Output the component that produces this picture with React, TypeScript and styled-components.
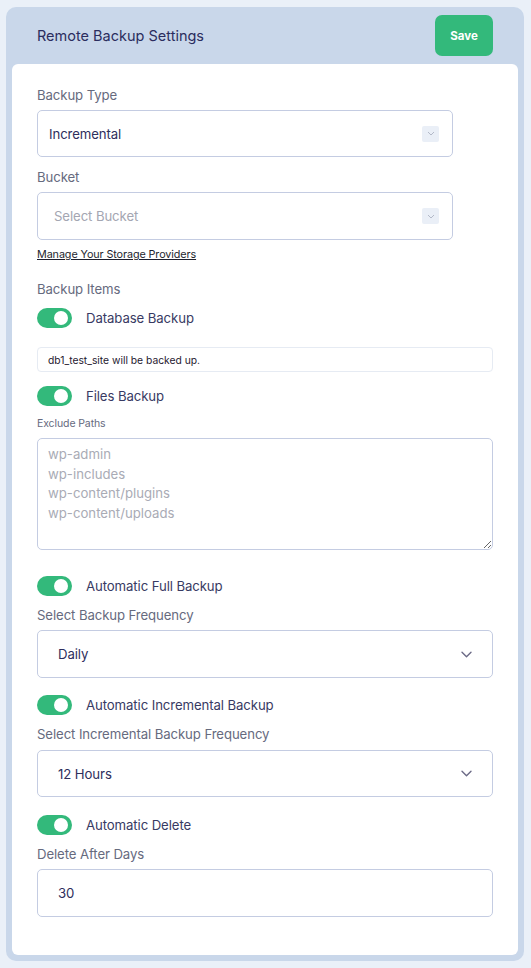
import React from "react";
import styled, { createGlobalStyle } from "styled-components";

const GlobalStyle = createGlobalStyle`
  html, body { margin: 0; padding: 0; background: #eaf0f8; }
  body { font-family: Inter, "Noto Sans", "Liberation Sans", sans-serif; -webkit-font-smoothing: antialiased; }
  * { box-sizing: border-box; }
`;

const Page = styled.div`
  padding: 7px 7px 7px 6px;
`;

const Panel = styled.div`
  background: #c9d7ea;
  border-radius: 10px;
  padding: 0 6px 6px 6px;
`;

const Header = styled.div`
  display: flex;
  align-items: center;
  justify-content: space-between;
  padding: 8px 25px 8px 25px;
`;

const Title = styled.h1`
  margin: 0;
  font-size: 14.5px;
  font-weight: 400;
  color: #2b2d5e;
  letter-spacing: 0;
`;

const SaveButton = styled.button`
  width: 58px;
  height: 41px;
  border: none;
  border-radius: 7px;
  background: #33b97b;
  color: #fff;
  font-family: inherit;
  font-size: 11.5px;
  font-weight: 700;
  cursor: pointer;
`;

const Card = styled.div`
  background: #fff;
  border-radius: 6px;
  padding: 21px 25px 38px 25px;
  display: flex;
  flex-direction: column;
`;

const Label = styled.div<{ $small?: boolean; $mt?: number }>`
  font-size: ${(p) => (p.$small ? "10.5px" : "13.2px")};
  line-height: ${(p) => (p.$small ? "15px" : "20px")};
  color: #666a7e;
  margin-top: ${(p) => p.$mt ?? 0}px;
  letter-spacing: -0.1px;
`;

const SelectBox = styled.div<{ $width?: number; $pad: number; $mt: number; $h: number }>`
  margin-top: ${(p) => p.$mt}px;
  height: ${(p) => p.$h}px;
  width: ${(p) => (p.$width ? `${p.$width}px` : "100%")};
  border: 1px solid #c4cce2;
  border-radius: 5px;
  display: flex;
  align-items: center;
  justify-content: space-between;
  padding: 0 ${(p) => p.$pad}px;
  background: #fff;
`;

const Value = styled.span<{ $placeholder?: boolean }>`
  font-size: 13.2px;
  color: ${(p) => (p.$placeholder ? "#a4a6b2" : "#2d2e5c")};
  letter-spacing: -0.1px;
`;

const ArrowBox = styled.span<{ $shift?: number }>`
  width: 17px;
  height: 16px;
  background: #eaeff7;
  border-radius: 2px;
  display: flex;
  align-items: center;
  justify-content: center;
  margin-right: ${(p) => p.$shift ?? 2}px;
`;

const Chevron = styled.svg`
  display: block;
`;

const Link = styled.a`
  margin-top: 7px;
  font-size: 10.8px;
  line-height: 15px;
  color: #1d1f2e;
  text-decoration: underline;
  align-self: flex-start;
  letter-spacing: -0.1px;
`;

const ToggleRow = styled.div<{ $mt: number }>`
  margin-top: ${(p) => p.$mt}px;
  display: flex;
  align-items: center;
  gap: 14px;
  height: 20px;
`;

const Toggle = styled.span`
  position: relative;
  width: 35px;
  height: 20px;
  border-radius: 10px;
  background: #33b97b;
  flex-shrink: 0;
  &::after {
    content: "";
    position: absolute;
    right: 4px;
    top: 3px;
    width: 14px;
    height: 14px;
    border-radius: 50%;
    background: #fff;
  }
`;

const ToggleLabel = styled.span`
  font-size: 13.2px;
  color: #383a63;
  letter-spacing: -0.1px;
`;

const InfoBox = styled.div`
  margin-top: 19px;
  height: 25px;
  border: 1px solid #e6ebf3;
  border-radius: 4px;
  display: flex;
  align-items: center;
  padding: 0 10px;
  font-size: 10.3px;
  color: #1f2030;
`;

const TextArea = styled.textarea`
  margin-top: 7px;
  height: 112px;
  width: 100%;
  border: 1px solid #c4cce2;
  border-radius: 5px;
  padding: 6px 10px;
  font-family: inherit;
  font-size: 13.2px;
  line-height: 19.7px;
  color: #2d2e5c;
  resize: vertical;
  &::placeholder { color: #a9abb5; }
`;

const SmallChevron = () => (
  <Chevron width="8" height="5" viewBox="0 0 8 5">
    <path d="M1 1l3 3 3-3" fill="none" stroke="#b3b9c8" strokeWidth="1" />
  </Chevron>
);

const BigChevron = () => (
  <Chevron width="11" height="7" viewBox="0 0 11 7">
    <path d="M1 1.2l4.5 4.5 4.5-4.5" fill="none" stroke="#6b6a86" strokeWidth="1.4" strokeLinecap="round" strokeLinejoin="round" />
  </Chevron>
);

export default function App() {
  return (
    <>
      <GlobalStyle />
      <Page>
        <Panel>
          <Header>
            <Title>Remote Backup Settings</Title>
            <SaveButton>Save</SaveButton>
          </Header>
          <Card>
            <Label>Backup Type</Label>
            <SelectBox $width={416} $pad={11} $mt={5} $h={47}>
              <Value>Incremental</Value>
              <ArrowBox><SmallChevron /></ArrowBox>
            </SelectBox>

            <Label $mt={10}>Bucket</Label>
            <SelectBox $width={416} $pad={16} $mt={5} $h={48}>
              <Value $placeholder>Select Bucket</Value>
              <ArrowBox $shift={-3}><SmallChevron /></ArrowBox>
            </SelectBox>
            <Link href="#">Manage Your Storage Providers</Link>

            <Label $mt={17}>Backup Items</Label>
            <ToggleRow $mt={9}>
              <Toggle />
              <ToggleLabel>Database Backup</ToggleLabel>
            </ToggleRow>
            <InfoBox>db1_test_site will be backed up.</InfoBox>
            <ToggleRow $mt={14}>
              <Toggle />
              <ToggleLabel>Files Backup</ToggleLabel>
            </ToggleRow>
            <Label $small $mt={10}>Exclude Paths</Label>
            <TextArea
              placeholder={"wp-admin\nwp-includes\nwp-content/plugins\nwp-content/uploads"}
            />

            <ToggleRow $mt={26}>
              <Toggle />
              <ToggleLabel>Automatic Full Backup</ToggleLabel>
            </ToggleRow>
            <Label $mt={9}>Select Backup Frequency</Label>
            <SelectBox $pad={20} $mt={5} $h={48}>
              <Value>Daily</Value>
              <BigChevron />
            </SelectBox>

            <ToggleRow $mt={17}>
              <Toggle />
              <ToggleLabel>Automatic Incremental Backup</ToggleLabel>
            </ToggleRow>
            <Label $mt={9}>Select Incremental Backup Frequency</Label>
            <SelectBox $pad={20} $mt={6} $h={47}>
              <Value>12 Hours</Value>
              <BigChevron />
            </SelectBox>

            <ToggleRow $mt={18}>
              <Toggle />
              <ToggleLabel>Automatic Delete</ToggleLabel>
            </ToggleRow>
            <Label $mt={9}>Delete After Days</Label>
            <SelectBox $pad={20} $mt={5} $h={48}>
              <Value>30</Value>
            </SelectBox>
          </Card>
        </Panel>
      </Page>
    </>
  );
}
